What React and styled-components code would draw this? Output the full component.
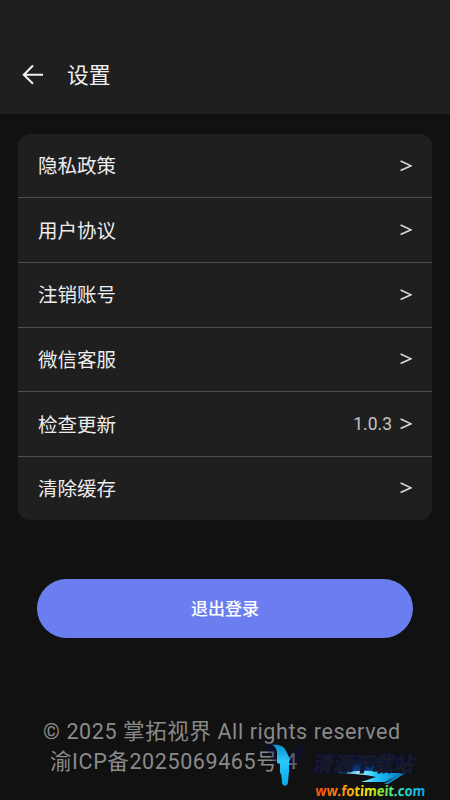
import React from 'react';
import styled, { createGlobalStyle } from 'styled-components';

const GlobalStyle = createGlobalStyle`
  * {
    box-sizing: border-box;
  }
  body {
    margin: 0;
    background-color: #111;
    font-family: Roboto, 'Noto Sans CJK SC', sans-serif;
  }
`;

const items = [
  { label: '隐私政策' },
  { label: '用户协议' },
  { label: '注销账号' },
  { label: '微信客服' },
  { label: '检查更新', value: '1.0.3' },
  { label: '清除缓存' },
];

const BackIcon = () => (
  <svg width="22" height="22" viewBox="0 0 22 22" fill="none">
    <path d="M11 1.6L1.8 10.7l9.2 9.1M2 10.7h19" stroke="#f0f0f0" strokeWidth="2.1" />
  </svg>
);

const ArrowIcon = () => (
  <svg width="12" height="12" viewBox="0 0 12 12" fill="none">
    <path d="M.6 1L11 5.8.6 10.6" stroke="#d8d8d8" strokeWidth="1.6" />
  </svg>
);

const SiteBadge = () => (
  <Badge>
    <svg width="186" height="62" viewBox="0 0 186 62">
      <defs>
        <linearGradient id="wing" x1="0" y1="0" x2="0" y2="1">
          <stop offset="0" stopColor="#0a8fd0" />
          <stop offset="0.4" stopColor="#2cc8f8" />
          <stop offset="1" stopColor="#0aa8ea" />
        </linearGradient>
        <linearGradient id="glow" x1="0" y1="0" x2="0" y2="1">
          <stop offset="0" stopColor="#06123c" stopOpacity="0" />
          <stop offset="1" stopColor="#0a4fa8" />
        </linearGradient>
        <linearGradient id="swoosh" x1="0" y1="0" x2="1" y2="0">
          <stop offset="0" stopColor="#0a4a9c" />
          <stop offset="0.35" stopColor="#a8f0ff" />
          <stop offset="0.6" stopColor="#22c4f8" />
          <stop offset="1" stopColor="#0678c0" />
        </linearGradient>
        <linearGradient id="rainbow" x1="0" y1="0" x2="1" y2="0">
          <stop offset="0" stopColor="#ff4a12" />
          <stop offset="0.25" stopColor="#ff8c0c" />
          <stop offset="0.45" stopColor="#ffe800" />
          <stop offset="0.62" stopColor="#7cf040" />
          <stop offset="0.78" stopColor="#20e0c0" />
          <stop offset="1" stopColor="#149cf8" />
        </linearGradient>
      </defs>
      <path d="M0 6c7-3 13 0 16 8v16C10 26 5 18 0 6z" fill="#050b4c" opacity="0.35" />
      <path d="M41 6c-8 2-14 6-15 12v14c8-5 13-14 15-26z" fill="#050b4c" opacity="0.35" />
      <path
        d="M8 7c7-1 12 1 14 6l3 6v14l-1 11c0 5-6 5-6 0l-1-9-1 1V26l-3-1V15c0-4-2-7-5-8z"
        fill="url(#wing)"
      />
      <path d="M76 18c12-3 36-3 46 2l6 15H70z" fill="url(#glow)" />
      <path d="M73 35c20-3 38-3 54 0h11l-17 9H97l15-5c-12-3-25-3-39-4z" fill="url(#swoosh)" />
      <path d="M134 37l9-3-19 12h-4z" fill="#0a8cd0" />
      <BadgeTitle x="48" y="33" textLength="101" lengthAdjust="spacingAndGlyphs">
        清源下载站
      </BadgeTitle>
      <g transform="translate(51 57.5) skewX(-4)">
        <BadgeUrl textLength="110" lengthAdjust="spacingAndGlyphs">
          ww.fotimeit.com
        </BadgeUrl>
      </g>
    </svg>
  </Badge>
);

const App = () => {
  return (
    <Page>
      <GlobalStyle />
      <Header>
        <BackIcon />
        <Title>设置</Title>
      </Header>
      <Main>
        <List>
          {items.map(({ label, value }) => (
            <Item key={label}>
              <ItemLabel>{label}</ItemLabel>
              <ItemEnd>
                {value && <span>{value}</span>}
                <ArrowIcon />
              </ItemEnd>
            </Item>
          ))}
        </List>
        <LogoutButton>退出登录</LogoutButton>
      </Main>
      <Footer>
        <CopyLine>© 2025 掌拓视界 All rights reserved</CopyLine>
        <IcpLine>渝ICP备2025069465号-4</IcpLine>
        <SiteBadge />
      </Footer>
    </Page>
  );
};

const Page = styled.div`
  display: flex;
  flex-direction: column;
  width: 450px;
  height: 800px;
  overflow: hidden;
  background-color: #111;
`;

const Header = styled.header`
  display: flex;
  align-items: center;
  gap: 23px;
  height: 114px;
  padding: 36px 22px 0;
  background-color: #1f1f1f;
`;

const Title = styled.h1`
  margin: 0;
  padding-top: 1px;
  color: #f0f0f0;
  font-size: 21.8px;
  font-weight: 400;
  line-height: 30px;
`;

const Main = styled.main`
  display: flex;
  flex-direction: column;
  padding: 20px 18px 0;
`;

const List = styled.ul`
  margin: 0;
  padding: 0;
  list-style: none;
  overflow: hidden;
  border-radius: 12px;
  background-color: #1f1f1f;
`;

const Item = styled.li`
  display: flex;
  align-items: center;
  justify-content: space-between;
  height: 64.7px;
  padding: 0 20px;
  color: #ededed;
  font-size: 19.5px;

  &:first-child {
    height: 63.2px;
  }

  &:last-child {
    height: 64px;
  }

  & + & {
    border-top: 1px solid #4e4e4e;
  }
`;

const ItemLabel = styled.span`
  padding-bottom: 1.6px;
`;

const ItemEnd = styled.div`
  display: flex;
  align-items: center;
  gap: 8px;
  color: #c4c4c4;
  font-size: 17.5px;
`;

const LogoutButton = styled.button`
  height: 59px;
  margin: 59px 19px 0;
  padding: 0 0 2px;
  border: 0;
  border-radius: 30px;
  background-color: #6b7ef0;
  color: #fff;
  font-family: inherit;
  font-size: 17px;
  font-weight: 500;
`;

const Footer = styled.footer`
  position: relative;
  flex: 1;
  padding-top: 79px;
  color: #8a8a8a;
  font-size: 21.5px;
  letter-spacing: 0.6px;
  line-height: 30px;
  white-space: nowrap;
`;

const CopyLine = styled.div`
  padding-left: 43px;
`;

const IcpLine = styled.div`
  padding-left: 50px;
`;

const Badge = styled.div`
  position: absolute;
  right: 0;
  bottom: 0;
  height: 62px;
  letter-spacing: 0;
`;

const BadgeTitle = styled.text`
  font-family: 'Noto Sans CJK SC', sans-serif;
  font-size: 20px;
  font-style: italic;
  font-weight: 700;
  fill: #191c26;
  stroke: #0a1038;
  stroke-width: 1.6px;
  paint-order: stroke;
`;

const BadgeUrl = styled.text`
  font-family: 'Open Sans', sans-serif;
  font-size: 14.5px;
  font-weight: 700;
  fill: url(#rainbow);
`;

export default App;
